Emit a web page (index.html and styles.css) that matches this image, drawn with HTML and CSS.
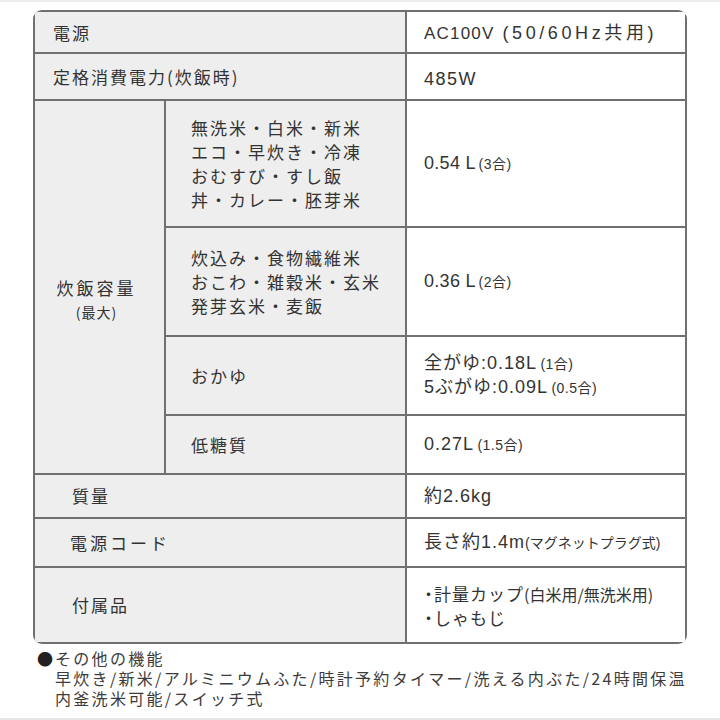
FILE: index.html
```html
<!DOCTYPE html>
<html lang="ja">
<head>
<meta charset="utf-8">
<title>仕様</title>
<link rel="stylesheet" href="styles.css">
</head>
<body>
<div class="page">
  <div class="spec">
    <div class="c lab span2 l-top"><div>電源</div></div>
    <div class="c val v-ac"><div>AC100V <span class="hz">(50/60Hz共用)</span></div></div>

    <div class="c lab span2"><div>定格消費電力(炊飯時)</div></div>
    <div class="c val v-w"><div>485W</div></div>

    <div class="c lab cap">
      <div class="cap-main">炊飯容量</div>
      <div class="cap-sub">(最大)</div>
    </div>
    <div class="c sub"><div>無洗米・白米・新米<br>エコ・早炊き・冷凍<br>おむすび・すし飯<br>丼・カレー・胚芽米</div></div>
    <div class="c val num"><div>0.54 L <span class="sm">(3合)</span></div></div>

    <div class="c sub"><div>炊込み・食物繊維米<br>おこわ・雑穀米・玄米<br>発芽玄米・麦飯</div></div>
    <div class="c val num"><div>0.36 L <span class="sm">(2合)</span></div></div>

    <div class="c sub"><div>おかゆ</div></div>
    <div class="c val num two wide"><div>全がゆ:0.18L <span class="sm">(1合)</span><br>5ぶがゆ:0.09L <span class="sm">(0.5合)</span></div></div>

    <div class="c sub"><div>低糖質</div></div>
    <div class="c val num wide"><div>0.27L <span class="sm">(1.5合)</span></div></div>

    <div class="c lab span2 ind"><div>質量</div></div>
    <div class="c val num wide"><div>約2.6kg</div></div>

    <div class="c lab span2 ind cord"><div>電源コード</div></div>
    <div class="c val num wide"><div>長さ約1.4m<span class="xs">(マグネットプラグ式)</span></div></div>

    <div class="c lab span2 ind"><div>付属品</div></div>
    <div class="c val two acc"><div><span class="pt">・</span>計量カップ<span class="md">(白米用/無洗米用)</span><br><span class="pt">・</span>しゃもじ</div></div>
  </div>

  <div class="notes">
    <p class="note-head"><span class="dot">●</span>その他の機能</p>
    <p class="note-line">早炊き/新米/アルミニウムふた/時計予約タイマー/洗える内ぶた/24時間保温</p>
    <p class="note-line">内釜洗米可能/スイッチ式</p>
  </div>
</div>
</body>
</html>
```

FILE: styles.css
```css
html, body {
  margin: 0;
  padding: 0;
  background: #ffffff;
}

.page {
  width: 720px;
  height: 720px;
  box-sizing: border-box;
  border-top: 2px solid #ececec;
  border-bottom: 2px solid #e6e6e6;
  padding: 8px 0 0 33px;
  font-family: "Noto Sans CJK JP", "Noto Sans", sans-serif;
  color: #333333;
}

.spec {
  width: 654px;
  box-sizing: border-box;
  display: grid;
  grid-template-columns: 129px 239px 278px;
  grid-template-rows: 40px 45px 125px 107px 77px 57px 42px 47px 74px;
  gap: 2px;
  padding: 2px;
  background: #707070;
  border-radius: 9px;
  overflow: hidden;
}

.c {
  display: flex;
  flex-direction: column;
  justify-content: center;
  font-size: 17px;
  line-height: 24px;
}

.lab {
  background: #eeeeee;
  padding-left: 18px;
  letter-spacing: 2px;
}

.span2 {
  grid-column: span 2;
}

.l-top {
  padding-top: 2px;
}

.ind {
  padding-left: 37px;
}

.cord {
  padding-left: 35px;
  letter-spacing: 3px;
}

.cap {
  grid-row: span 4;
  align-items: center;
  padding: 26px 6px 0 0;
  letter-spacing: 3px;
}

.cap-main {
  line-height: 24px;
}

.cap-sub {
  font-size: 14px;
  line-height: 24px;
  letter-spacing: 1px;
}

.sub {
  background: #eeeeee;
  padding-left: 25px;
  letter-spacing: 2px;
  line-height: 24px;
}

.val {
  background: #ffffff;
  padding-left: 17px;
}

.v-ac {
  font-family: "Liberation Sans", "Noto Sans CJK JP", sans-serif;
  font-size: 17px;
  letter-spacing: 1.2px;
  padding-top: 2px;
}

.hz {
  font-size: 18px;
  letter-spacing: 3.6px;
  margin-left: 2px;
}

.v-w {
  font-family: "Liberation Sans", "Noto Sans CJK JP", sans-serif;
  font-size: 18px;
  letter-spacing: 1.5px;
  padding-top: 4px;
}

.num {
  font-family: "Liberation Sans", "Noto Sans CJK JP", sans-serif;
  font-size: 18px;
  letter-spacing: 0.3px;
}

.wide {
  letter-spacing: 1px;
}

.two {
  line-height: 23px;
}

.sm {
  font-size: 14px;
  margin-left: -2px;
  letter-spacing: 0.5px;
}

.xs {
  font-size: 14px;
  letter-spacing: 0;
}

.acc {
  letter-spacing: 1px;
}

.pt {
  letter-spacing: -3px;
  margin-left: -4px;
}

.md {
  font-size: 16px;
  letter-spacing: 0;
}

.notes {
  margin-top: 4px;
  padding-left: 4px;
  font-size: 16px;
  line-height: 20px;
  letter-spacing: 2.3px;
  color: #3c3c3c;
}

.notes p {
  margin: 0;
}

.dot {
  letter-spacing: 0;
  margin-right: 2px;
  color: #222222;
}

.note-line {
  padding-left: 18px;
}
```
